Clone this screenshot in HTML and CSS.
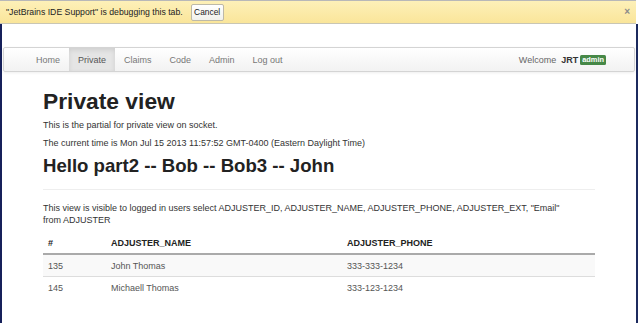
FILE: index.html
```html
<!DOCTYPE html>
<html>
<head>
<meta charset="utf-8">
<link rel="stylesheet" href="styles.css">
</head>
<body>
<div class="infobar">
  <span class="info-text">"JetBrains IDE Support" is debugging this tab.</span>
  <button class="btn-cancel">Cancel</button>
  <span class="info-close">×</span>
</div>
<div class="viewport">
  <div class="navbar">
    <ul class="nav">
      <li><a>Home</a></li>
      <li class="active"><a>Private</a></li>
      <li><a>Claims</a></li>
      <li><a>Code</a></li>
      <li><a>Admin</a></li>
      <li><a>Log out</a></li>
    </ul>
    <div class="welcome">Welcome <b>JRT</b> <span class="label">admin</span></div>
  </div>
  <div class="container">
    <h1>Private view</h1>
    <p>This is the partial for private view on socket.</p>
    <p>The current time is Mon Jul 15 2013 11:57:52 GMT-0400 (Eastern Daylight Time)</p>
    <h2>Hello part2 -- Bob -- Bob3 -- John</h2>
    <hr>
    <p class="note">This view is visible to logged in users select ADJUSTER_ID, ADJUSTER_NAME, ADJUSTER_PHONE, ADJUSTER_EXT, "Email" from ADJUSTER</p>
    <table class="table">
      <colgroup><col class="c1"><col class="c2"><col class="c3"></colgroup>
      <thead>
        <tr><th>#</th><th>ADJUSTER_NAME</th><th>ADJUSTER_PHONE</th></tr>
      </thead>
      <tbody>
        <tr class="odd"><td>135</td><td>John Thomas</td><td>333-333-1234</td></tr>
        <tr><td>145</td><td>Michaell Thomas</td><td>333-123-1234</td></tr>
      </tbody>
    </table>
  </div>
</div>
</body>
</html>
```

FILE: styles.css
```css
html, body {
  margin: 0;
  padding: 0;
  background: #ffffff;
  height: 100%;
  overflow: hidden;
}
body {
  font-family: "Liberation Sans", Arial, sans-serif;
  font-size: 9px;
  line-height: 12px;
  color: #333;
}
.infobar {
  box-sizing: border-box;
  width: 636px;
  height: 24px;
  border-top: 1px solid #b8b8b8;
  border-bottom: 1px solid #c9c6b4;
  background: linear-gradient(#fdf0b8, #fae59a);
  display: flex;
  align-items: center;
  padding-left: 6px;
  position: relative;
}
.info-text {
  font-size: 8.7px;
  color: #222;
  line-height: 12px;
}
.btn-cancel {
  margin-left: 8px;
  height: 17px;
  width: 33px;
  padding: 0;
  font-family: "Liberation Sans", Arial, sans-serif;
  font-size: 8.4px;
  color: #222;
  background: linear-gradient(#ffffff, #f1f1ec);
  border: 1px solid #bdb9a8;
  border-radius: 2px;
}
.info-close {
  position: absolute;
  right: 6px;
  top: 5px;
  font-size: 10px;
  color: #8a8a8a;
  font-weight: bold;
}
.viewport {
  box-sizing: border-box;
  width: 638px;
  height: 299px;
  border-left: 2px solid #16205a;
  border-right: 2px solid #1c2a5e;
  padding-top: 23px;
}
.navbar {
  margin: 0 1px;
  height: 25px;
  box-sizing: border-box;
  border: 1px solid #d4d4d4;
  border-radius: 2px;
  background: linear-gradient(#ffffff, #f2f2f2);
  box-shadow: 0 1px 3px rgba(0,0,0,0.065);
  display: flex;
  justify-content: space-between;
  align-items: center;
  padding: 0 28px 0 23px;
}
.nav {
  list-style: none;
  margin: 0;
  padding: 0;
  display: flex;
  align-self: stretch;
}
.nav li a {
  display: block;
  padding: 5.5px 9px;
  line-height: 12px;
  color: #777;
}
.nav li.active a {
  background: #e5e5e5;
  color: #555;
  box-shadow: inset 0 2px 5px rgba(0,0,0,0.1);
}
.welcome {
  color: #666;
  display: flex;
  align-items: center;
  gap: 2px;
}
.welcome b {
  color: #333;
  margin-left: 3px;
}
.label {
  background: #468847;
  color: #fff;
  font-weight: bold;
  font-size: 7.4px;
  line-height: 8px;
  padding: 1px 2px;
  border-radius: 1.5px;
}
.container {
  width: 552px;
  margin: 0 auto;
}
h1 {
  font-size: 22.8px;
  line-height: 24px;
  margin: 17px 0 6px;
  color: #222;
}
p {
  margin: 0 0 5.5px;
}
h2 {
  font-size: 18.6px;
  line-height: 24px;
  margin: 5.5px 0 0;
  color: #222;
}
hr {
  margin: 11px 0;
  border: 0;
  border-top: 1px solid #eee;
  border-bottom: 1px solid #fff;
}
.note {
  margin-bottom: 6px;
  padding-right: 18px;
}
.table {
  width: 552px;
  border-collapse: collapse;
  table-layout: fixed;
}
.c1 { width: 63px; }
.c2 { width: 236px; }
.c3 { width: 253px; }
.table th, .table td {
  text-align: left;
  padding: 4.5px 5px;
  line-height: 12px;
}
.table th {
  color: #222;
  border-bottom: 2px solid #aaa;
}
.table td {
  color: #555;
  border-top: 1px solid #ddd;
}
.table tr.odd td {
  background: #f9f9f9;
}
```
